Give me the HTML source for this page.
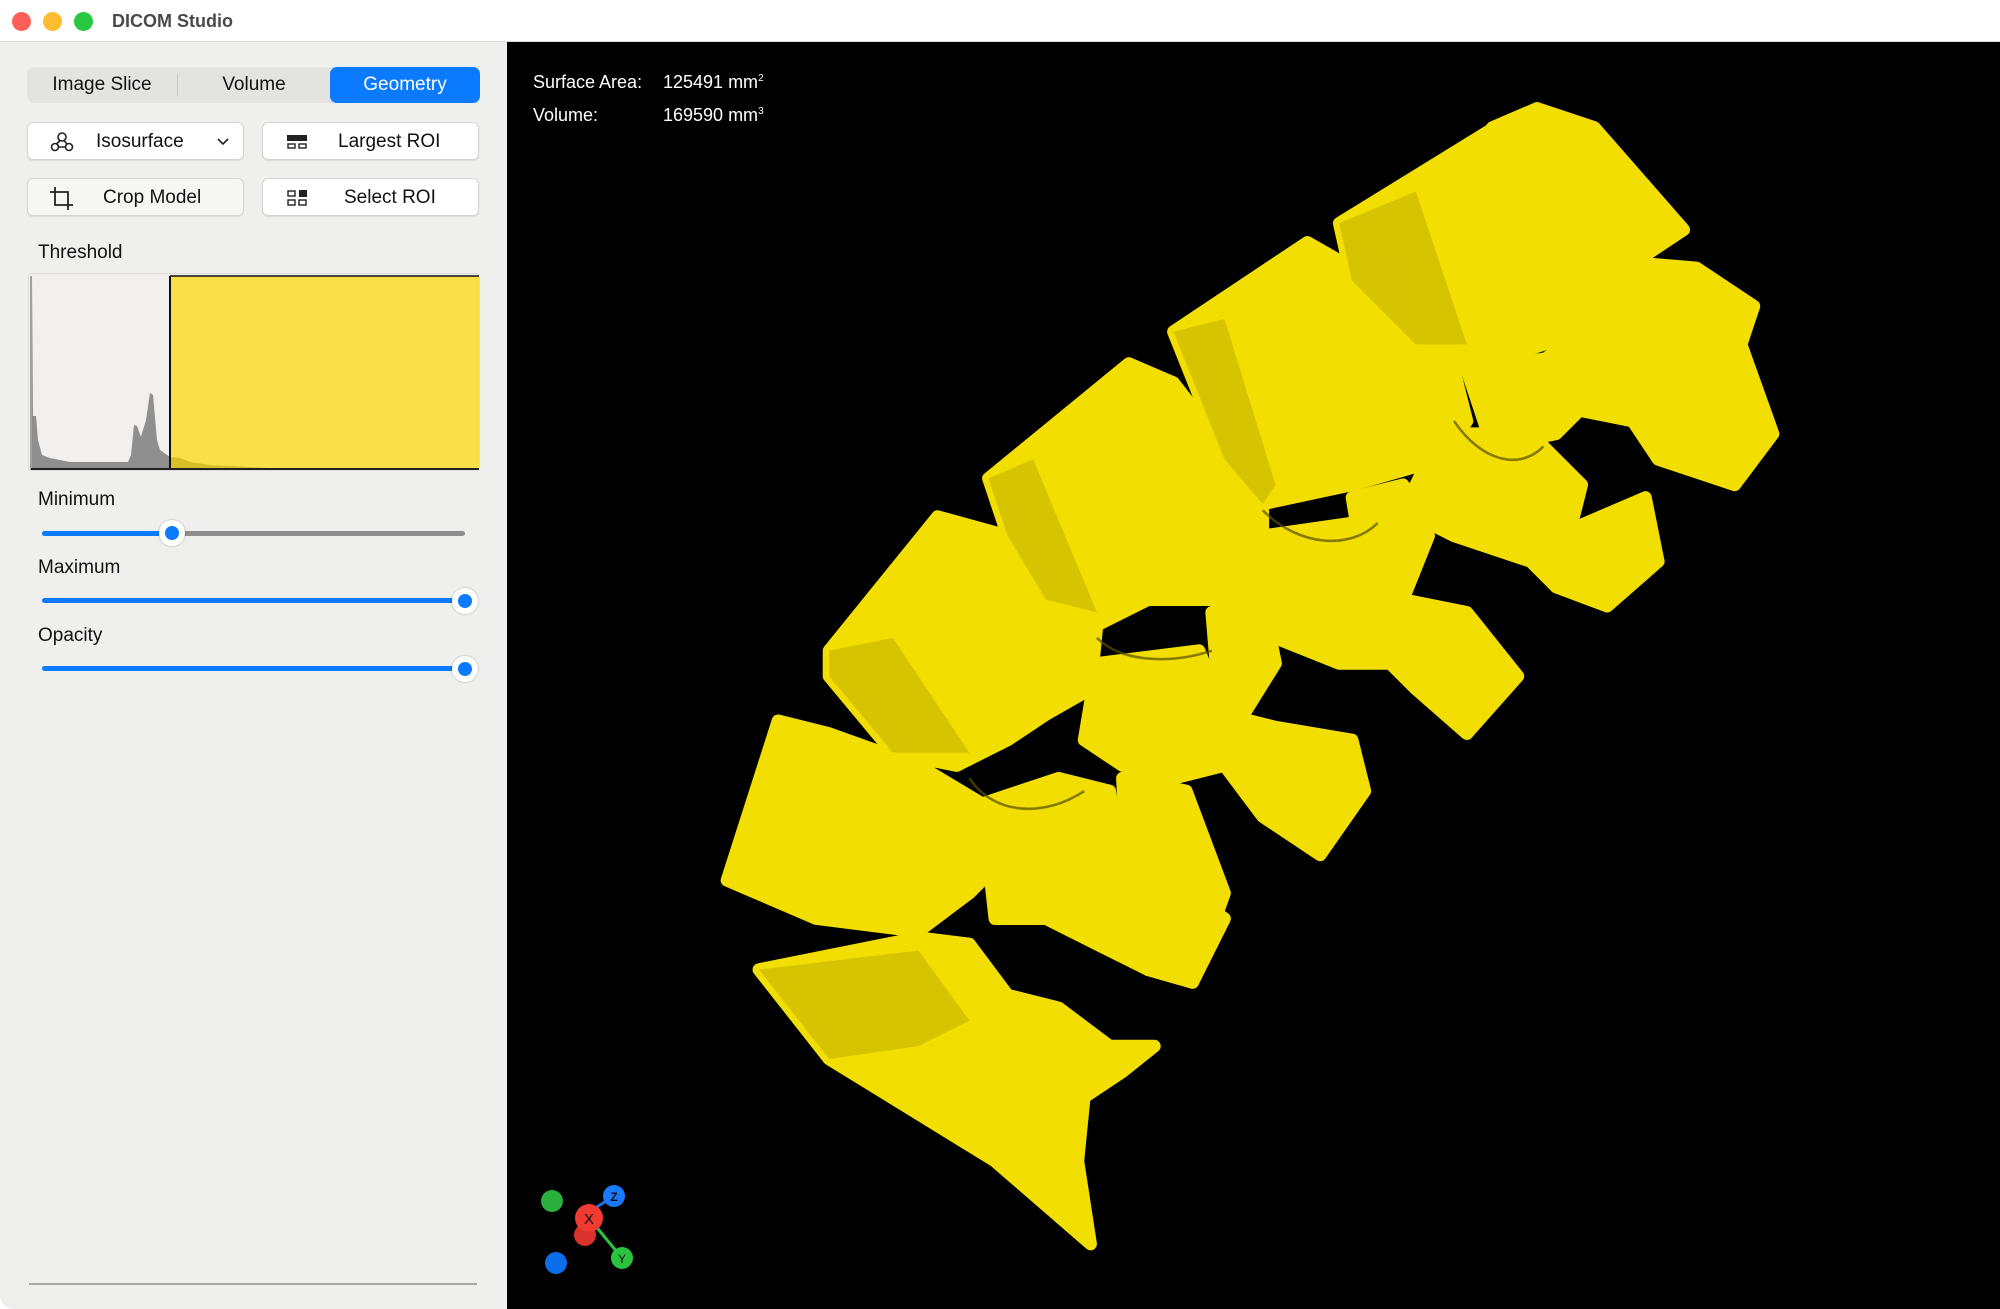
<!DOCTYPE html>
<html><head><meta charset="utf-8"><style>
*{margin:0;padding:0;box-sizing:border-box}
body{width:2000px;height:1309px;overflow:hidden;background:#fff;font-family:"Liberation Sans",sans-serif;position:relative}
.abs{position:absolute}
.title{left:0;top:0;width:2000px;height:42px;background:#fff;border-bottom:1px solid #dcdcdc}
.dot{width:19px;height:19px;border-radius:50%;top:12px}
.panel{left:0;top:42px;width:507px;height:1267px;background:#efefed;border-bottom-left-radius:14px}
.view{left:507px;top:42px;width:1493px;height:1267px;background:#000}
.seg{left:27px;top:67px;width:453px;height:36px;background:#e3e3e1;border-radius:8px}
.segt{position:absolute;top:0;height:36px;line-height:36px;font-size:19px;color:#111;text-align:center}
.btn{position:absolute;height:38px;background:#fff;border:1px solid #d4d4d2;border-radius:6px;box-shadow:0 1px 1px rgba(0,0,0,.08);font-size:19px;color:#111;line-height:38px}
.lbl{position:absolute;left:38px;font-size:19px;color:#111}
.track{position:absolute;left:42px;width:423px;height:5px;border-radius:3px;background:#8e8e8e}
.knob{position:absolute;width:26px;height:26px;border-radius:50%;background:#fff;box-shadow:0 0 2px rgba(0,0,0,.3)}
.knob::after{content:"";position:absolute;left:6px;top:6px;width:14px;height:14px;border-radius:50%;background:#0a7aff}
.ov{position:absolute;color:#fff;font-size:18px}
</style></head><body>
<div class="abs title"></div>
<div class="abs dot" style="left:12px;background:#fe5f57"></div>
<div class="abs dot" style="left:43px;background:#febc2e"></div>
<div class="abs dot" style="left:74px;background:#28c840"></div>
<div class="abs" style="left:112px;top:11px;font-size:18px;font-weight:bold;color:#4a4a4a">DICOM Studio</div>

<div class="abs panel"></div>
<div class="abs seg">
 <div class="segt" style="left:0;width:150px">Image Slice</div>
 <div style="position:absolute;left:150px;top:7px;width:1px;height:22px;background:#c8c8c8"></div>
 <div class="segt" style="left:151px;width:152px">Volume</div>
 <div class="segt" style="left:303px;width:150px;background:#0a7aff;color:#fff;border-radius:7px">Geometry</div>
</div>

<div class="btn" style="left:27px;top:122px;width:217px">
 <svg class="abs" style="left:22px;top:8px" width="24" height="22" viewBox="0 0 24 22" fill="none" stroke="#222" stroke-width="1.6"><circle cx="12" cy="6" r="4"/><circle cx="5" cy="16" r="3.5"/><circle cx="19" cy="16" r="3.5"/><path d="M10 9.5 6.5 13M14 9.5l3 3.5M8.5 16h7"/></svg>
 <span class="abs" style="left:68px">Isosurface</span>
 <svg class="abs" style="left:188px;top:14px" width="14" height="10" viewBox="0 0 14 10"><path d="M2 2l5 5 5-5" fill="none" stroke="#222" stroke-width="1.6"/></svg>
</div>
<div class="btn" style="left:262px;top:122px;width:217px">
 <svg class="abs" style="left:24px;top:12px" width="20" height="14" viewBox="0 0 20 14"><rect x="0" y="0" width="20" height="6" fill="#222"/><rect x="1" y="9" width="7" height="4" fill="none" stroke="#222" stroke-width="1.4"/><rect x="12" y="9" width="7" height="4" fill="none" stroke="#222" stroke-width="1.4"/></svg>
 <span class="abs" style="left:75px">Largest ROI</span>
</div>
<div class="btn" style="left:27px;top:178px;width:217px;background:#f6f6f5">
 <svg class="abs" style="left:21px;top:7px" width="26" height="26" viewBox="0 0 26 26" fill="none" stroke="#222" stroke-width="1.8"><path d="M6 1v18h18M1 6h18v18"/></svg>
 <span class="abs" style="left:75px">Crop Model</span>
</div>
<div class="btn" style="left:262px;top:178px;width:217px">
 <svg class="abs" style="left:24px;top:11px" width="20" height="16" viewBox="0 0 20 16"><rect x="1" y="1" width="7" height="5" fill="none" stroke="#222" stroke-width="1.4"/><rect x="12" y="0" width="8" height="7" fill="#222"/><rect x="1" y="10" width="7" height="5" fill="none" stroke="#222" stroke-width="1.4"/><rect x="12" y="10" width="7" height="5" fill="none" stroke="#222" stroke-width="1.4"/></svg>
 <span class="abs" style="left:81px">Select ROI</span>
</div>

<div class="lbl" style="top:242px">Threshold</div>
<svg class="abs" style="left:0;top:0" width="507" height="500">
 <rect x="28.5" y="273.5" width="451" height="197" rx="3" fill="#f1f0ee" stroke="#dcdcda"/>
 <rect x="170" y="276" width="309" height="193" fill="#f9e04a"/>
 <path d="M32 275L33 416 36 416 38 440 42 455 50 458 60 460 70 462 128 462 131 455 134 425 137 426 141 437 146 420 150 393 153 395 157 440 160 450 170 457 170 469 32 469Z" fill="#8f8f8f"/>
 <path d="M170 457L180 458 190 462 210 465 290 469 170 469Z" fill="#d8bf2a"/>
 <line x1="31" y1="276" x2="31" y2="470" stroke="#888" stroke-width="1.5"/>
 <line x1="170" y1="276" x2="170" y2="470" stroke="#111" stroke-width="2"/>
 <line x1="170" y1="276" x2="479" y2="276" stroke="#111" stroke-width="1.5"/>
 <line x1="31" y1="469" x2="479" y2="469" stroke="#222" stroke-width="2"/>
</svg>

<div class="lbl" style="top:489px">Minimum</div>
<div class="track" style="top:531px"></div>
<div class="track" style="top:531px;width:130px;background:#0a7aff"></div>
<div class="knob" style="left:159px;top:520px"></div>
<div class="lbl" style="top:557px">Maximum</div>
<div class="track" style="top:598px;background:#0a7aff"></div>
<div class="knob" style="left:452px;top:588px"></div>
<div class="lbl" style="top:625px">Opacity</div>
<div class="track" style="top:666px;background:#0a7aff"></div>
<div class="knob" style="left:452px;top:656px"></div>
<div class="abs" style="left:29px;top:1283px;width:448px;height:2px;background:#a8a8a8"></div>

<div class="abs view"></div>
<div class="ov" style="left:533px;top:72px">Surface Area:</div>
<div class="ov" style="left:663px;top:72px">125491 mm<sup style="font-size:10px">2</sup></div>
<div class="ov" style="left:533px;top:105px">Volume:</div>
<div class="ov" style="left:663px;top:105px">169590 mm<sup style="font-size:10px">3</sup></div>

<svg class="abs" style="left:0;top:0" width="2000" height="1309" viewBox="0 0 1568 1026" preserveAspectRatio="none">
 <g fill="#f2de00" stroke="#f2de00" stroke-width="10" stroke-linejoin="round">
  <path d="M1170 100L1205 85 1250 100 1320 180 1290 200 1230 200Z"/>
  <path d="M1270 205L1330 210 1375 240 1365 270 1390 340 1360 380 1300 360 1280 330 1230 320 1200 290 1240 260Z"/>
  <path d="M1050 175L1175 98 1215 110 1280 200 1270 250 1150 290 1110 270 1060 220Z"/>
  <path d="M1150 290L1220 280 1260 300 1220 340 1170 350Z"/>
  <path d="M1130 340L1200 340 1240 380 1230 420 1300 440 1260 475 1220 460 1200 440 1140 420 1100 400Z"/>
  <path d="M1220 420L1290 390 1300 440 1260 475 1220 460Z"/>
  <path d="M920 260L1025 190 1060 210 1140 290 1150 330 1130 360 1060 380 990 395 960 360Z"/>
  <path d="M990 420L1060 410 1100 470 1150 480 1190 530 1150 575 1110 540 1090 520 1050 520 1000 500 960 490Z"/>
  <path d="M1060 390L1100 380 1120 420 1100 470 1070 450Z"/>
  <path d="M775 375L885 285 920 300 990 390 990 440 960 470 900 470 860 490 820 470 790 420Z"/>
  <path d="M650 510L735 405 790 420 860 490 855 540 820 560 790 580 750 600 700 590 650 530Z"/>
  <path d="M860 520L940 510 960 560 1000 570 1060 580 1070 620 1035 670 990 640 960 600 920 610 880 600 850 580Z"/>
  <path d="M950 480L990 470 1000 520 975 560 955 540Z"/>
  <path d="M570 690L610 565 650 575 720 600 770 630 780 680 760 700 720 730 640 720Z"/>
  <path d="M770 630L830 610 870 620 880 680 930 700 960 720 935 770 900 760 860 740 820 720 780 720Z"/>
  <path d="M880 610L930 620 960 700 935 770 900 760 885 700Z"/>
  <path d="M595 760L720 735 760 740 790 780 830 790 870 820 905 820 880 840 850 860 845 910 855 975 780 910 650 830Z"/>
 </g>
 <g fill="#9a8400" opacity=".3">
  <path d="M1050 175L1110 150 1150 270 1110 270 1060 220Z"/>
  <path d="M920 260L960 250 1000 380 990 395 960 360Z"/>
  <path d="M775 375L810 360 860 480 820 470 790 420Z"/>
  <path d="M650 510L700 500 760 590 700 590 650 530Z"/>
  <path d="M595 760L720 745 760 800 720 820 650 830Z"/>
 </g>
 <g fill="none" stroke="#5a4d00" stroke-width="2" opacity=".7">
  <path d="M1140 330C1160 360 1190 370 1210 350"/>
  <path d="M990 400C1020 430 1060 430 1080 410"/>
  <path d="M860 500C880 520 920 520 950 510"/>
  <path d="M760 610C780 640 820 640 850 620"/>
 </g>
</svg>

<svg class="abs" style="left:520px;top:1160px" width="120" height="120" viewBox="0 0 120 120">
 <line x1="69" y1="52" x2="94" y2="36" stroke="#1e6fe0" stroke-width="3"/>
 <line x1="69" y1="58" x2="102" y2="98" stroke="#2bc23f" stroke-width="3"/>
 <circle cx="32" cy="41" r="11" fill="#2bb040"/>
 <circle cx="36" cy="103" r="11" fill="#0a6fe8"/>
 <circle cx="65" cy="75" r="11" fill="#d8322b"/>
 <circle cx="69" cy="58" r="14" fill="#f03a32"/>
 <circle cx="94" cy="36" r="11" fill="#1a7aff"/>
 <circle cx="102" cy="98" r="11" fill="#2bc23f"/>
 <text x="69" y="64" font-size="15" font-family="Liberation Sans" text-anchor="middle" fill="#111">X</text>
 <text x="94" y="41" font-size="12" font-family="Liberation Sans" font-weight="bold" text-anchor="middle" fill="#111">Z</text>
 <text x="102" y="103" font-size="12" font-family="Liberation Sans" text-anchor="middle" fill="#111">Y</text>
</svg>
</body></html>
